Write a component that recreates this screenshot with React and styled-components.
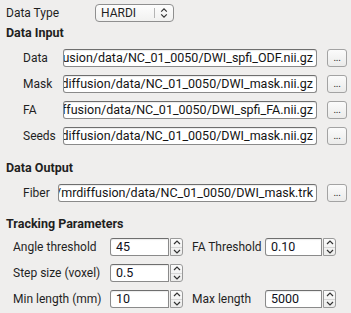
import React from "react";
import styled, { createGlobalStyle } from "styled-components";

const GlobalStyle = createGlobalStyle`
  html, body { margin: 0; padding: 0; background: #efeeed; }
  body { font-family: Roboto, "Liberation Sans", sans-serif; font-size: 12px; color: #1f1f1f; }
  * { box-sizing: border-box; }
`;

const Page = styled.div`
  width: 351px;
  height: 313px;
  padding: 4px 4px 0 6px;
  display: flex;
  flex-direction: column;
  overflow: hidden;
`;

const TopRow = styled.div`
  display: flex;
  align-items: center;
  height: 18px;
`;

const Label = styled.div`
  white-space: nowrap;
  line-height: 16px;
  width: ${(p) => (p.$w ? `${p.$w}px` : "auto")};
  flex: none;
`;

const Combo = styled.div`
  width: 79px;
  height: 18px;
  display: flex;
  align-items: center;
  border: 1px solid #8f8f8f;
  border-radius: 4px;
  background: linear-gradient(#fdfdfd, #f1f1f0);
  padding-left: 5px;
`;

const ComboText = styled.div`
  flex: 1;
  line-height: 16px;
`;

const ComboSep = styled.div`
  width: 1px;
  height: 10px;
  background: #b5b5b5;
  margin-right: 5px;
`;

const ComboArrows = styled.svg`
  width: 8px;
  height: 12px;
  margin-right: 5px;
`;

const Header = styled.div`
  font-weight: 700;
  font-size: 12.5px;
  line-height: 16px;
  margin-top: ${(p) => p.$mt}px;
  white-space: nowrap;
`;

const FileGrid = styled.div`
  display: grid;
  grid-template-columns: ${(p) => p.$label}px 1fr 20px;
  row-gap: 8px;
  padding-left: 17px;
  margin-top: ${(p) => p.$mt}px;
  align-items: center;
`;

const PathField = styled.div`
  height: 18px;
  margin-right: 10px;
  background: #ffffff;
  border: 1px solid #8a8a8a;
  border-top-color: #6e6e6e;
  border-radius: 3px;
  box-shadow: inset 0 1px 1px rgba(0, 0, 0, 0.08);
  display: flex;
  justify-content: flex-end;
  align-items: center;
  overflow: hidden;
  padding-right: 3px;
`;

const PathText = styled.span`
  white-space: nowrap;
  flex: none;
  font-size: 12.5px;
  line-height: 16px;
  color: #141414;
`;

const BrowseButton = styled.div`
  width: 20px;
  height: 18px;
  border: 1px solid #a3a3a3;
  border-radius: 3px;
  background: linear-gradient(#fbfbfb, #ebebea);
  display: flex;
  justify-content: center;
  align-items: flex-end;
  font-size: 10px;
  line-height: 10px;
  padding-bottom: 3px;
  color: #262626;
  letter-spacing: -0.3px;
`;

const ParamGrid = styled.div`
  display: grid;
  grid-template-columns: 97px 73px 82px 71px;
  row-gap: 8px;
  padding-left: 7px;
  margin-top: 6px;
  align-items: center;
`;

const ParamLabel = styled.div`
  white-space: nowrap;
  line-height: 16px;
  padding-left: ${(p) => p.$pl || 0}px;
`;

const Spin = styled.div`
  display: flex;
  height: 18px;
`;

const SpinField = styled.div`
  flex: 1;
  background: #fff;
  border: 1px solid #8a8a8a;
  border-top-color: #6e6e6e;
  border-radius: 3px 0 0 3px;
  box-shadow: inset 0 1px 1px rgba(0, 0, 0, 0.08);
  padding-left: 5px;
  line-height: 16px;
  color: #101020;
  font-size: 12.5px;
`;

const SpinButtons = styled.div`
  width: 13px;
  margin-left: 1px;
  border: 1px solid #9a9a9a;
  border-radius: 0 3px 3px 0;
  background: linear-gradient(#fbfbfb, #ececeb);
  display: flex;
  flex-direction: column;
`;

const SpinHalf = styled.div`
  flex: 1;
  display: flex;
  align-items: center;
  justify-content: center;
  border-top: ${(p) => (p.$bottom ? "1px solid #d6d6d6" : "none")};
`;

const Chevron = ({ down }) => (
  <svg width="8" height="5" viewBox="0 0 8 5">
    <polyline
      points={down ? "1,1 4,4 7,1" : "1,4 4,1 7,4"}
      fill="none"
      stroke="#333"
      strokeWidth="1.2"
    />
  </svg>
);

const SpinBox = ({ value }) => (
  <Spin>
    <SpinField>{value}</SpinField>
    <SpinButtons>
      <SpinHalf>
        <Chevron />
      </SpinHalf>
      <SpinHalf $bottom>
        <Chevron down />
      </SpinHalf>
    </SpinButtons>
  </Spin>
);

const inputs = [
  ["Data", "usion/data/NC_01_0050/DWI_spfi_ODF.nii.gz"],
  ["Mask", "rdiffusion/data/NC_01_0050/DWI_mask.nii.gz"],
  ["FA", "iffusion/data/NC_01_0050/DWI_spfi_FA.nii.gz"],
  ["Seeds", "rdiffusion/data/NC_01_0050/DWI_mask.nii.gz"],
];

export default function App() {
  return (
    <>
      <GlobalStyle />
      <Page>
        <TopRow>
          <Label $w={89}>Data Type</Label>
          <Combo>
            <ComboText>HARDI</ComboText>
            <ComboSep />
            <ComboArrows viewBox="0 0 8 12">
              <polyline points="1.2,4.6 4,1.8 6.8,4.6" fill="none" stroke="#333" strokeWidth="1.2" />
              <polyline points="1.2,7.4 4,10.2 6.8,7.4" fill="none" stroke="#333" strokeWidth="1.2" />
            </ComboArrows>
          </Combo>
        </TopRow>

        <Header $mt={3}>Data Input</Header>
        <FileGrid $label={40} $mt={8}>
          {inputs.map(([label, path]) => (
            <React.Fragment key={label}>
              <Label>{label}</Label>
              <PathField>
                <PathText>{path}</PathText>
              </PathField>
              <BrowseButton>...</BrowseButton>
            </React.Fragment>
          ))}
        </FileGrid>

        <Header $mt={15}>Data Output</Header>
        <FileGrid $label={35} $mt={8}>
          <Label>Fiber</Label>
          <PathField>
            <PathText>r/mrdiffusion/data/NC_01_0050/DWI_mask.trk</PathText>
          </PathField>
          <BrowseButton>...</BrowseButton>
        </FileGrid>

        <Header $mt={14}>Tracking Parameters</Header>
        <ParamGrid>
          <ParamLabel>Angle threshold</ParamLabel>
          <SpinBox value="45" />
          <ParamLabel $pl={9}>FA Threshold</ParamLabel>
          <SpinBox value="0.10" />

          <ParamLabel>Step size (voxel)</ParamLabel>
          <SpinBox value="0.5" />
          <div />
          <div />

          <ParamLabel>Min length (mm)</ParamLabel>
          <SpinBox value="10" />
          <ParamLabel $pl={9}>Max length</ParamLabel>
          <SpinBox value="5000" />
        </ParamGrid>
      </Page>
    </>
  );
}
